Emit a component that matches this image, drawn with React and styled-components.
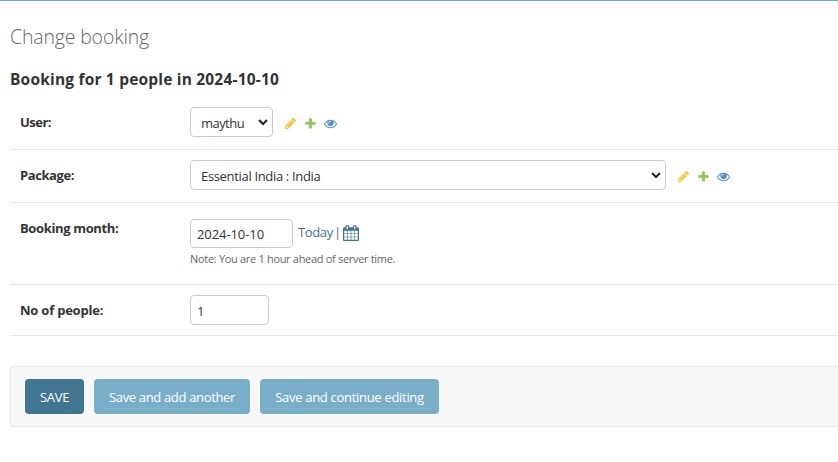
import React from 'react';
import styled, { createGlobalStyle } from 'styled-components';

const GlobalStyle = createGlobalStyle`
  * { box-sizing: border-box; }
  body {
    margin: 0;
    background: #fff;
    color: #333;
    font-family: "Open Sans", "Noto Sans", sans-serif;
    font-size: 13px;
    overflow: hidden;
  }
  h1, h2 { margin: 0; white-space: nowrap; }
`;

const Page = styled.main`
  height: 462px;
  padding: 24px 0 0 10px;
  border-top: 1px solid #79aec8;
  overflow: hidden;
`;

const Title = styled.h1`
  height: 24px;
  line-height: 23px;
  font-size: 19.5px;
  font-weight: 300;
  letter-spacing: -0.17px;
  color: #666;
`;

const Subtitle = styled.h2`
  height: 20px;
  margin-top: 20px;
  line-height: 21px;
  font-size: 15.5px;
  font-weight: 700;
  letter-spacing: 0.19px;
`;

const Form = styled.form`
  margin-top: 8px;
`;

const Row = styled.div`
  display: flex;
  align-items: flex-start;
  height: ${(p) => p.$height}px;
  padding: 10px;
  border-bottom: 1px solid #e8e8e8;
`;

const Label = styled.label`
  flex: 0 0 170px;
  line-height: 20px;
  padding-top: 5px;
  font-size: 13px;
  font-weight: 700;
  letter-spacing: ${(p) => p.$tracking || 0}px;
`;

const SelectBox = styled.div`
  display: flex;
  align-items: center;
  justify-content: space-between;
  width: ${(p) => p.$width}px;
  height: 30px;
  padding: 1px 4px 0 10px;
  border: 1px solid #ccc;
  border-radius: 4px;
  letter-spacing: ${(p) => p.$tracking}px;

  svg { margin-top: -1px; }
`;

const RelatedLinks = styled.div`
  display: flex;
  gap: 7px;
  margin: 10px 0 0 11px;

  svg { opacity: 0.8; }
`;

const DateField = styled.div`
  padding-top: 6px;
`;

const DateLine = styled.div`
  display: flex;
  align-items: flex-start;
`;

const Input = styled.input`
  width: ${(p) => p.$width}px;
  height: ${(p) => p.$height}px;
  padding: 1px 6px 0;
  border: 1px solid #ccc;
  border-radius: 4px;
  background: #fff;
  color: #333;
  font: inherit;
  letter-spacing: ${(p) => p.$tracking || 0}px;
`;

const Shortcuts = styled.div`
  display: flex;
  margin-left: 5px;
  line-height: 20px;
  padding-top: 3px;
  color: #417690;

  span { width: 34px; letter-spacing: -0.38px; }
  i { width: 11px; padding-left: 2px; font-style: normal; color: #666; }
  svg { margin-top: 3px; }
`;

const Note = styled.div`
  margin-top: 3px;
  line-height: 16px;
  font-size: 11px;
  letter-spacing: -0.31px;
  color: #666;
  white-space: nowrap;
`;

const SubmitRow = styled.div`
  display: flex;
  gap: 10px;
  height: 61px;
  margin-top: 30px;
  padding: 12px 14px;
  background: #f8f8f8;
  border: 1px solid #e8e8e8;
  border-right: 0;
  border-radius: 4px 0 0 4px;
`;

const Button = styled.button`
  width: ${(p) => p.$width}px;
  height: 35px;
  padding: 0;
  border: 0;
  border-radius: 4px;
  background: ${(p) => (p.$primary ? '#417690' : '#79aec8')};
  color: #fff;
  font: inherit;
  letter-spacing: ${(p) => p.$tracking}px;
  white-space: nowrap;
`;

const glyphs = {
  pencil: {
    color: '#efb80b',
    d: 'M491 1536l91-91-235-235-91 91v107h128v128h107zm523-928q0-22-22-22-10 0-17 7l-542 542q-7 7-7 17 0 22 22 22 10 0 17-7l542-542q7-7 7-17zm-54-192l416 416-832 832h-416v-416zm683 96q0 53-37 90l-166 166-416-416 166-165q36-38 90-38 53 0 91 38l235 234q37 39 37 91z',
  },
  plus: {
    color: '#70bf2b',
    d: 'M1600 796v192q0 40-28 68t-68 28h-416v416q0 40-28 68t-68 28h-192q-40 0-68-28t-28-68v-416h-416q-40 0-68-28t-28-68v-192q0-40 28-68t68-28h416v-416q0-40 28-68t68-28h192q40 0 68 28t28 68v416h416q40 0 68 28t28 68z',
  },
  eye: {
    color: '#2b70bf',
    d: 'M1664 960q-152-236-381-353 61 104 61 225 0 185-131.5 316.5t-316.5 131.5-316.5-131.5-131.5-316.5q0-121 61-225-229 117-381 353 133 205 333.5 326.5t434.5 121.5 434.5-121.5 333.5-326.5zm-720-384q0-20-14-34t-34-14q-125 0-214.5 89.5t-89.5 214.5q0 20 14 34t34 14 34-14 14-34q0-86 61-147t147-61q20 0 34-14t14-34zm848 384q0 34-20 69-140 230-376.5 368.5t-499.5 138.5-499.5-139-376.5-368q-20-35-20-69t20-69q140-229 376.5-368t499.5-139 499.5 139 376.5 368q20 35 20 69z',
  },
  calendar: {
    color: '#417690',
    d: 'M192 1664h288v-288h-288v288zm352 0h320v-288h-320v288zm-352-352h288v-320h-288v320zm352 0h320v-320h-320v320zm-352-384h288v-288h-288v288zm736 736h320v-288h-320v288zm-384-736h320v-288h-320v288zm768 736h288v-288h-288v288zm-384-352h320v-320h-320v320zm-352-864v-288q0-13-9.5-22.5t-22.5-9.5h-64q-13 0-22.5 9.5t-9.5 22.5v288q0 13 9.5 22.5t22.5 9.5h64q13 0 22.5-9.5t9.5-22.5zm736 864h288v-320h-288v320zm-384-384h320v-288h-320v288zm384 0h288v-288h-288v288zm32-480v-288q0-13-9.5-22.5t-22.5-9.5h-64q-13 0-22.5 9.5t-9.5 22.5v288q0 13 9.5 22.5t22.5 9.5h64q13 0 22.5-9.5t9.5-22.5zm384-64v1280q0 52-38 90t-90 38h-1408q-52 0-90-38t-38-90v-1280q0-52 38-90t90-38h128v-96q0-66 47-113t113-47h64q66 0 113 47t47 113v96h384v-96q0-66 47-113t113-47h64q66 0 113 47t47 113v96h128q52 0 90 38t38 90z',
  },
};

function Icon({ name, size = 13 }) {
  const { color, d } = glyphs[name];
  const box = name === 'calendar' ? '64 0 1664 1792' : '0 0 1792 1792';
  return (
    <svg width={size} height={size} viewBox={box} preserveAspectRatio="none">
      <path fill={color} d={d} />
    </svg>
  );
}

function Select({ width, tracking, children }) {
  return (
    <SelectBox $width={width} $tracking={tracking}>
      <span>{children}</span>
      <svg width="10" height="7" viewBox="0 0 10 7">
        <path d="M1 1l4 4 4-4" fill="none" stroke="#222" strokeWidth="2" />
      </svg>
    </SelectBox>
  );
}

function Related() {
  return (
    <RelatedLinks>
      <Icon name="pencil" />
      <Icon name="plus" />
      <Icon name="eye" />
    </RelatedLinks>
  );
}

export default function App() {
  return (
    <>
      <GlobalStyle />
      <Page>
        <Title>Change booking</Title>
        <Subtitle>Booking for 1 people in 2024-10-10</Subtitle>
        <Form>
          <Row $height={53}>
            <Label $tracking={-0.5}>User:</Label>
            <Select width={83} tracking={-0.55}>maythu</Select>
            <Related />
          </Row>
          <Row $height={53}>
            <Label $tracking={-0.42}>Package:</Label>
            <Select width={476} tracking={-0.33}>Essential India : India</Select>
            <Related />
          </Row>
          <Row $height={82}>
            <Label $tracking={-0.36}>Booking month:</Label>
            <DateField>
              <DateLine>
                <Input $width={103} $height={29} $tracking={-0.08} defaultValue="2024-10-10" />
                <Shortcuts>
                  <span>Today</span>
                  <i>|</i>
                  <Icon name="calendar" size={16} />
                </Shortcuts>
              </DateLine>
              <Note>Note: You are 1 hour ahead of server time.</Note>
            </DateField>
          </Row>
          <Row $height={51}>
            <Label $tracking={-0.22}>No of people:</Label>
            <Input $width={79} $height={30} defaultValue="1" />
          </Row>
          <SubmitRow>
            <Button type="button" $primary $width={59} $tracking={-0.3}>SAVE</Button>
            <Button type="button" $width={156} $tracking={-0.34}>Save and add another</Button>
            <Button type="button" $width={179} $tracking={-0.3}>Save and continue editing</Button>
          </SubmitRow>
        </Form>
      </Page>
    </>
  );
}
